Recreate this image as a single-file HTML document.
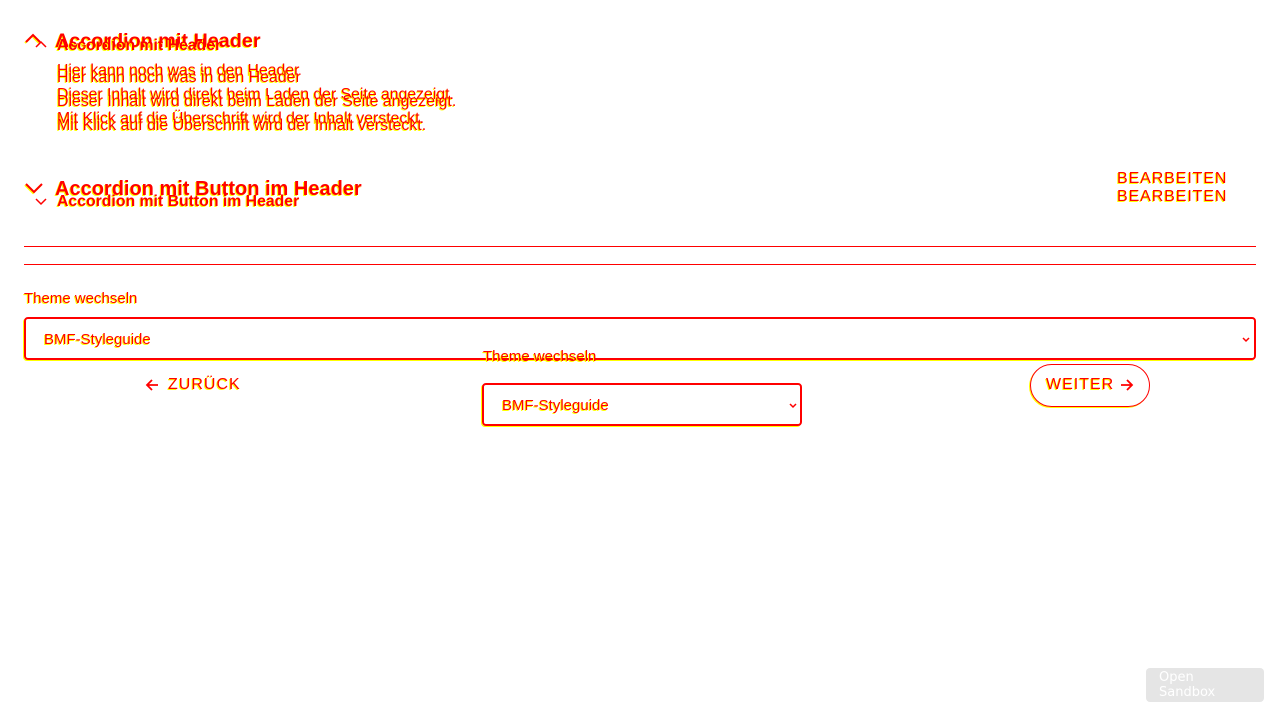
<!DOCTYPE html>
<html><head><meta charset="utf-8"><style>
html,body{margin:0;width:1280px;height:720px;background:#fff;overflow:hidden;position:relative;font-family:"Liberation Sans",sans-serif;}
.t{position:absolute;color:#f00;text-shadow:-1px 1px 0 #ff0;white-space:nowrap;line-height:1;}
.b{font-weight:bold;}
.ln{position:absolute;left:24px;width:1232px;height:1px;background:#f00;}
.box{position:absolute;border:2px solid #f00;border-radius:4px;box-shadow:-1px 1px 0 #ff0;box-sizing:border-box;}
svg{position:absolute;overflow:visible}
</style></head><body>
<!-- layout A -->
<svg style="left:25px;top:33px" width="16" height="10"><polyline points="1,9 8,2 15,9" fill="none" stroke="#ff0" stroke-width="2" transform="translate(-1,1)"/><polyline points="1,9 8,2 15,9" fill="none" stroke="#f00" stroke-width="2"/></svg>
<div class="t b" style="left:55px;top:32px;font-size:19.8px">Accordion mit Header</div>
<div class="t" style="left:57px;top:63px;font-size:15.8px">Hier kann noch was in den Header</div>
<div class="t" style="left:57px;top:87px;font-size:15.8px">Dieser Inhalt wird direkt beim Laden der Seite angezeigt.</div>
<div class="t" style="left:57px;top:111px;font-size:15.8px">Mit Klick auf die Überschrift wird der Inhalt versteckt.</div>
<svg style="left:25px;top:183px" width="18" height="10"><polyline points="1,1 9,9 17,1" fill="none" stroke="#ff0" stroke-width="2" transform="translate(-1,1)"/><polyline points="1,1 9,9 17,1" fill="none" stroke="#f00" stroke-width="2"/></svg>
<div class="t b" style="left:55px;top:179px;font-size:20px">Accordion mit Button im Header</div>
<div class="t" style="left:1117px;top:171px;font-size:16px;letter-spacing:0.9px">BEARBEITEN</div>
<div class="ln" style="top:246px"></div>
<div class="ln" style="top:264px"></div>
<div class="t" style="left:24px;top:291px;font-size:15px">Theme wechseln</div>
<div class="box" style="left:24px;top:317px;width:1232px;height:43px"></div>
<div class="t" style="left:44px;top:332px;font-size:15px">BMF-Styleguide</div>
<svg style="left:1242px;top:337px" width="8" height="5"><polyline points="1,1 4,4 7,1" fill="none" stroke="#f00" stroke-width="1.5"/></svg>
<svg style="left:145px;top:379px" width="14" height="12"><path d="M13,6 H2 M7,1 L2,6 L7,11" fill="none" stroke="#f00" stroke-width="1.8"/></svg>
<div class="t" style="left:168px;top:377px;font-size:16px;letter-spacing:1px">ZURÜCK</div>
<div class="box" style="left:1030px;top:364px;width:120px;height:43px;border-radius:22px;border-width:1.5px"></div>
<div class="t" style="left:1046px;top:377px;font-size:16px;letter-spacing:1px">WEITER</div>
<svg style="left:1120px;top:379px" width="14" height="12"><path d="M1,6 H12 M7,1 L12,6 L7,11" fill="none" stroke="#f00" stroke-width="1.8"/></svg>
<!-- layout B -->
<svg style="left:35px;top:41px" width="12" height="6"><polyline points="1,6 6,1 11,6" fill="none" stroke="#f00" stroke-width="1.5"/></svg>
<div class="t b" style="left:57px;top:38px;font-size:15.8px">Accordion mit Header</div>
<div class="t" style="left:57px;top:70px;font-size:15.9px">Hier kann noch was in den Header</div>
<div class="t" style="left:57px;top:94px;font-size:15.9px">Dieser Inhalt wird direkt beim Laden der Seite angezeigt.</div>
<div class="t" style="left:57px;top:118px;font-size:15.9px">Mit Klick auf die Überschrift wird der Inhalt versteckt.</div>
<svg style="left:35px;top:198px" width="12" height="6"><polyline points="1,1 6,6 11,1" fill="none" stroke="#f00" stroke-width="1.5"/></svg>
<div class="t b" style="left:57px;top:194px;font-size:15.8px">Accordion mit Button im Header</div>
<div class="t" style="left:1117px;top:189px;font-size:16px;letter-spacing:0.9px">BEARBEITEN</div>
<div class="t" style="left:483px;top:349px;font-size:15px">Theme wechseln</div>
<div class="box" style="left:482px;top:383px;width:320px;height:43px"></div>
<div class="t" style="left:502px;top:398px;font-size:15px">BMF-Styleguide</div>
<svg style="left:789px;top:403px" width="8" height="5"><polyline points="1,1 4,4 7,1" fill="none" stroke="#f00" stroke-width="1.5"/></svg>
<div style="position:absolute;left:1146px;top:668px;width:118px;height:34px;background:#e5e5e5;border-radius:4px;color:#fff;font-family:'DejaVu Sans',sans-serif;font-size:13px;line-height:15px;padding:2px 0 0 13px;box-sizing:border-box">Open<br>Sandbox</div>
</body></html>
